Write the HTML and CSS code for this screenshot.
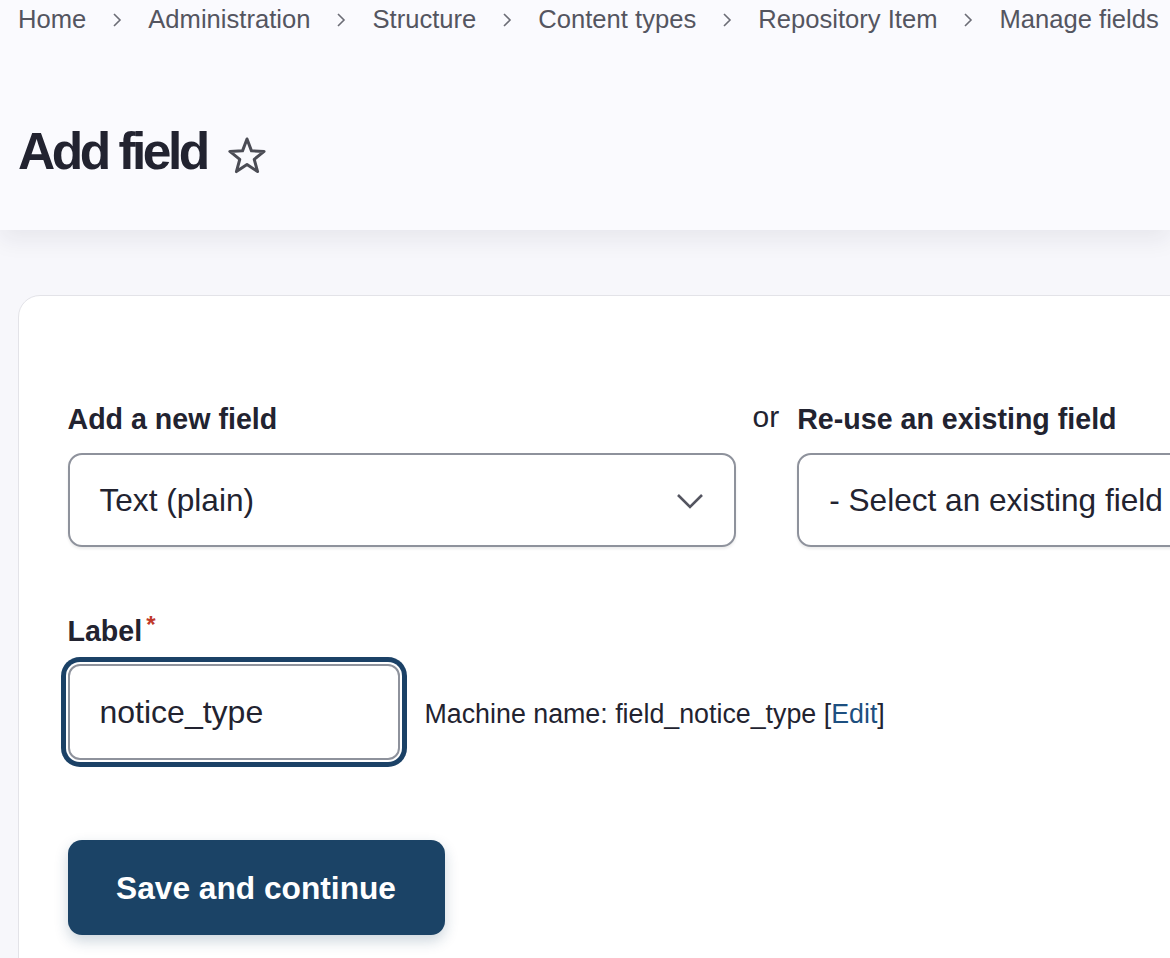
FILE: index.html
```html
<!DOCTYPE html>
<html lang="en">
<head>
<meta charset="utf-8">
<title>Add field</title>
<link rel="stylesheet" href="styles.css">
</head>
<body>
<header class="page-header">
  <nav class="breadcrumb">
    <a href="#">Home</a>
    <svg class="sep" viewBox="0 0 10 16" width="10" height="16"><path d="M2 2l6 6-6 6" fill="none" stroke="currentColor" stroke-width="1.6"/></svg>
    <a href="#">Administration</a>
    <svg class="sep" viewBox="0 0 10 16" width="10" height="16"><path d="M2 2l6 6-6 6" fill="none" stroke="currentColor" stroke-width="1.6"/></svg>
    <a href="#">Structure</a>
    <svg class="sep" viewBox="0 0 10 16" width="10" height="16"><path d="M2 2l6 6-6 6" fill="none" stroke="currentColor" stroke-width="1.6"/></svg>
    <a href="#">Content types</a>
    <svg class="sep" viewBox="0 0 10 16" width="10" height="16"><path d="M2 2l6 6-6 6" fill="none" stroke="currentColor" stroke-width="1.6"/></svg>
    <a href="#">Repository Item</a>
    <svg class="sep" viewBox="0 0 10 16" width="10" height="16"><path d="M2 2l6 6-6 6" fill="none" stroke="currentColor" stroke-width="1.6"/></svg>
    <a href="#">Manage fields</a>
  </nav>
  <div class="title-row">
    <h1 class="page-title">Add field</h1>
    <svg class="star" viewBox="0 0 40 37" width="40" height="37"><path d="M20 2L24.47 13.85 37.12 14.44 27.23 22.35 30.58 34.56 20 27.6 9.42 34.56 12.77 22.35 2.88 14.44 15.53 13.85Z" fill="none" stroke="currentColor" stroke-width="3" stroke-linejoin="round"/></svg>
  </div>
</header>

<main class="content">
  <form class="card">
    <div class="field-row">
      <div class="form-item new-field">
        <label class="form-label">Add a new field</label>
        <div class="select">
          <span>Text (plain)</span>
          <svg class="chev" viewBox="0 0 28 16" width="28" height="16"><path d="M2 2l12 12 12-12" fill="none" stroke="currentColor" stroke-width="2.6"/></svg>
        </div>
      </div>
      <span class="or">or</span>
      <div class="form-item existing-field">
        <label class="form-label">Re-use an existing field</label>
        <div class="select">
          <span>- Select an existing field -</span>
        </div>
      </div>
    </div>

    <div class="form-item label-item">
      <label class="form-label">Label<span class="req">*</span></label>
      <div class="input-row">
        <div class="input focused">notice_type</div>
        <span class="machine">Machine name: field_notice_type [<a href="#">Edit</a>]</span>
      </div>
    </div>

    <div class="actions">
      <button type="button" class="button-primary">Save and continue</button>
    </div>
  </form>
</main>
</body>
</html>
```

FILE: styles.css
```css
* { box-sizing: border-box; }

html, body {
  margin: 0;
  padding: 0;
}

body {
  width: 1170px;
  height: 958px;
  overflow: hidden;
  background: #f7f7fb;
  font-family: "Liberation Sans", Arial, Helvetica, sans-serif;
  color: #222330;
}

.page-header {
  background: #fafafe;
  height: 230px;
  padding: 0 0 0 18px;
  box-shadow: 0 10px 22px rgba(30, 30, 60, 0.07);
  position: relative;
  z-index: 1;
}

.breadcrumb {
  display: flex;
  align-items: center;
  gap: 26px;
  height: 38px;
  font-size: 25.6px;
  line-height: 38px;
  white-space: nowrap;
}

.breadcrumb a {
  color: #545560;
  text-decoration: none;
}

.breadcrumb .sep {
  color: #6b6c75;
  flex: none;
  margin-top: 1px;
}

.title-row {
  display: flex;
  align-items: center;
  margin-top: 82px;
  height: 62px;
}

.page-title {
  margin: 0;
  font-size: 51.5px;
  line-height: 62px;
  font-weight: 700;
  letter-spacing: -3.5px;
  color: #222330;
}

.star {
  color: #4b4c55;
  margin-left: 20px;
  margin-top: 8px;
  flex: none;
}

.content {
  padding: 65px 0 0 18px;
}

.card {
  width: 1400px;
  height: 800px;
  background: #fff;
  border: 1.5px solid #e3e3e8;
  border-radius: 22px 0 0 0;
  padding: 105px 0 0 48.5px;
}

.field-row {
  display: flex;
  align-items: flex-start;
  gap: 17px;
}

.form-item {
  display: flex;
  flex-direction: column;
}

.field-row > * {
  flex: none;
}

.form-label {
  font-size: 28.6px;
  line-height: 36px;
  font-weight: 700;
  color: #222330;
  margin-bottom: 16px;
  display: flex;
  align-items: flex-start;
}

.new-field { width: 668px; }
.existing-field { width: 520px; margin-left: 1px; }

.or {
  font-size: 30px;
  line-height: 32px;
  color: #222330;
}

.select {
  height: 94px;
  border: 2px solid #8e929c;
  border-radius: 14px;
  display: flex;
  align-items: center;
  justify-content: space-between;
  padding: 0 30px 0 30px;
  font-size: 31.6px;
  color: #222330;
  background: #fff;
  box-shadow: 0 2px 3px rgba(0, 0, 0, 0.08);
  white-space: nowrap;
  overflow: hidden;
}

.chev {
  color: #545560;
  margin-top: 2px;
  flex: none;
}

.label-item {
  margin-top: 66px;
}

.label-item .form-label {
  margin-bottom: 15px;
}

.req {
  color: #c0392b;
  font-size: 24px;
  line-height: 20px;
  margin-left: 4px;
  margin-top: 2px;
  font-weight: 700;
}

.input-row {
  display: flex;
  align-items: center;
}

.input {
  width: 332px;
  height: 96px;
  border: 2px solid #8e929c;
  border-radius: 12px;
  padding: 0 30px;
  display: flex;
  align-items: center;
  font-size: 32px;
  color: #222330;
  background: #fff;
}

.input.focused {
  box-shadow: 0 0 0 2px #fff, 0 0 0 7px #1b4166;
}

.machine {
  margin-left: 25px;
  font-size: 26.8px;
  color: #222330;
  white-space: nowrap;
  margin-top: 4px;
}

.machine a {
  color: #1d4f80;
  text-decoration: none;
}

.actions {
  margin-top: 80px;
}

.button-primary {
  width: 377px;
  height: 95px;
  border: none;
  border-radius: 14px;
  background: #1b4366;
  color: #fff;
  font-family: "Liberation Sans", Arial, Helvetica, sans-serif;
  font-size: 31.7px;
  font-weight: 700;
  box-shadow: 0 6px 14px rgba(27, 67, 102, 0.22);
  padding: 2px 0 0 0;
}
```
